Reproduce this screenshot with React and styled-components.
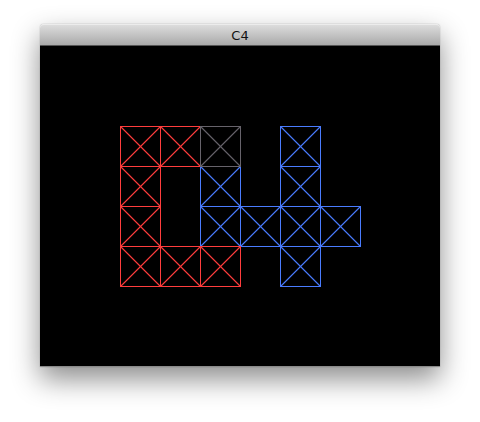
import React from "react";
import styled, { createGlobalStyle } from "styled-components";

const Global = createGlobalStyle`
  html, body { margin: 0; padding: 0; background: #ffffff; }
  body { width: 480px; height: 422px; overflow: hidden; }
`;

const Page = styled.div`
  padding: 24px 40px 0 40px;
`;

const Window = styled.div`
  width: 400px;
  border-radius: 4px 4px 0 0;
  box-shadow: 0 12px 28px rgba(0, 0, 0, 0.45), 0 0 1px rgba(0, 0, 0, 0.5);
  display: flex;
  flex-direction: column;
`;

const TitleBar = styled.div`
  height: 22px;
  border-radius: 4px 4px 0 0;
  background: linear-gradient(#dcdcdc 0%, #c6c6c6 45%, #a9a9a9 100%);
  border-top: 1px solid #ececec;
  box-sizing: border-box;
  display: flex;
  align-items: center;
  justify-content: center;
  font-family: "DejaVu Sans", "Liberation Sans", sans-serif;
  font-size: 13px;
  color: #111;
  border-bottom: 1px solid #555;
`;

const Canvas = styled.div`
  width: 400px;
  height: 321px;
  background: #000;
  border-bottom: 1px solid #8a8a8a;
  box-sizing: border-box;
  line-height: 0;
`;

const cells = [
  { c: 4, r: 3, k: "b" },
  { c: 4, r: 4, k: "b" },
  { c: 5, r: 4, k: "b" },
  { c: 6, r: 4, k: "b" },
  { c: 7, r: 4, k: "b" },
  { c: 6, r: 5, k: "b" },
  { c: 6, r: 2, k: "b" },
  { c: 6, r: 3, k: "b" },
  { c: 2, r: 2, k: "r" },
  { c: 3, r: 2, k: "r" },
  { c: 2, r: 3, k: "r" },
  { c: 2, r: 4, k: "r" },
  { c: 2, r: 5, k: "r" },
  { c: 3, r: 5, k: "r" },
  { c: 4, r: 5, k: "r" },
  { c: 4, r: 2, k: "g" },
];

const colors = { r: "#ff3d3d", b: "#4a7cff", g: "#67636b" };

function Cell({ c, r, k }) {
  const x = c * 40 + 0.5;
  const y = r * 40 + 0.5;
  return (
    <g stroke={colors[k]} strokeWidth="1" fill="none">
      <rect x={x} y={y} width="40" height="40" shapeRendering="crispEdges" />
      <line x1={x} y1={y} x2={x + 40} y2={y + 40} strokeWidth="1.1" />
      <line x1={x + 40} y1={y} x2={x} y2={y + 40} strokeWidth="1.1" />
    </g>
  );
}

export default function App() {
  return (
    <>
      <Global />
      <Page>
        <Window>
          <TitleBar>C4</TitleBar>
          <Canvas>
            <svg width="400" height="320" viewBox="0 0 400 320">
              {cells.map((d, i) => (
                <Cell key={i} {...d} />
              ))}
            </svg>
          </Canvas>
        </Window>
      </Page>
    </>
  );
}
